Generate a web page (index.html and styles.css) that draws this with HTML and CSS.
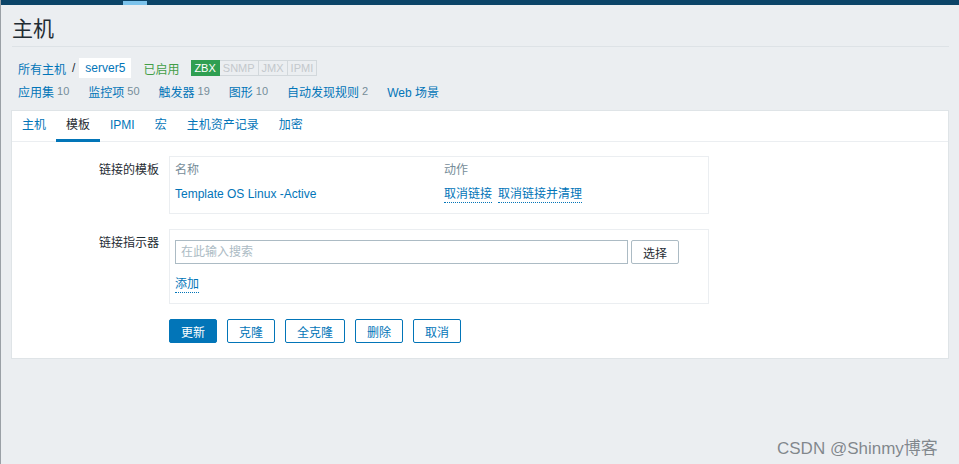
FILE: index.html
```html
<!DOCTYPE html>
<html lang="zh">
<head>
<meta charset="utf-8">
<title>主机</title>
<link rel="stylesheet" href="styles.css">
</head>
<body>
<div class="topbar"><span class="topbar-mark"></span></div>
<main class="page">
  <header class="page-header">
    <h1 class="title">主机</h1>
  </header>
  <nav class="crumbs">
    <a class="link" href="#">所有主机</a>
    <span class="sep">/</span>
    <span class="current">server5</span>
    <span class="status">已启用</span>
    <span class="avail">
      <span class="tag tag-on">ZBX</span><span class="tag">SNMP</span><span class="tag">JMX</span><span class="tag">IPMI</span>
    </span>
  </nav>
  <nav class="subnav">
    <a class="link" href="#">应用集</a><span class="count">10</span>
    <a class="link" href="#">监控项</a><span class="count">50</span>
    <a class="link" href="#">触发器</a><span class="count">19</span>
    <a class="link" href="#">图形</a><span class="count">10</span>
    <a class="link" href="#">自动发现规则</a><span class="count">2</span>
    <a class="link" href="#">Web 场景</a>
  </nav>
  <section class="card">
    <ul class="tabs">
      <li class="tab">主机</li>
      <li class="tab active">模板</li>
      <li class="tab">IPMI</li>
      <li class="tab">宏</li>
      <li class="tab">主机资产记录</li>
      <li class="tab">加密</li>
    </ul>
    <div class="form">
      <div class="label">链接的模板</div>
      <div class="box box-table">
        <div class="col1 head">名称</div>
        <div class="col2 head">动作</div>
        <div class="col1"><a class="link" href="#">Template OS Linux -Active</a></div>
        <div class="col2 actions"><a class="link dotted" href="#">取消链接</a><a class="link dotted" href="#">取消链接并清理</a></div>
      </div>
      <div class="label">链接指示器</div>
      <div class="box box-link">
        <div class="search-row">
          <input class="search" type="text" placeholder="在此输入搜索">
          <button class="btn-select" type="button">选择</button>
        </div>
        <a class="link dotted add" href="#">添加</a>
      </div>
      <div class="label"></div>
      <div class="buttons">
        <button class="btn btn-primary" type="button">更新</button>
        <button class="btn" type="button">克隆</button>
        <button class="btn" type="button">全克隆</button>
        <button class="btn" type="button">删除</button>
        <button class="btn" type="button">取消</button>
      </div>
    </div>
  </section>
</main>
<div class="watermark">CSDN @Shinmy博客</div>
</body>
</html>
```
FILE: styles.css
```css
* { box-sizing: border-box; }
html, body { margin: 0; padding: 0; }
body {
  width: 959px;
  height: 464px;
  overflow: hidden;
  background: #ebeef1;
  font-family: "Liberation Sans", Arial, "Noto Sans CJK SC", sans-serif;
  font-size: 12px;
  color: #1f2c33;
  border-left: 1px solid #9aa0a6;
  position: relative;
}
.topbar {
  height: 5px;
  background: #0b4468;
  position: relative;
}
.topbar-mark {
  position: absolute;
  left: 122px;
  top: 1px;
  width: 24px;
  height: 4px;
  background: #7cc3ec;
}
.page { padding: 0 10px 0 10px; }
.page-header {
  margin: 0 0 0 1px;
  border-bottom: 1px solid #dde2e6;
  height: 42px;
  display: flex;
  align-items: center;
}
.title {
  margin: 0;
  font-weight: normal;
  font-size: 21px;
  color: #1f2c33;
  line-height: 24px;
  padding-top: 6px;
}
.link { color: #0275b8; text-decoration: none; }
.crumbs {
  display: flex;
  align-items: center;
  margin-top: 11px;
  padding-left: 7px;
  height: 20px;
}
.sep { margin: 0 4px 0 6px; }
.current {
  background: #fff;
  color: #0275b8;
  height: 20px;
  line-height: 20px;
  padding: 0 6px;
}
.status { color: #429e47; margin-left: 12px; }
.avail { display: flex; margin-left: 12px; }
.tag {
  height: 16px;
  line-height: 14px;
  font-size: 11px;
  padding: 0 3px;
  color: #c3c8cc;
  border: 1px solid #d2d8dc;
  border-left: none;
}
.tag-on {
  background: #2f9f52;
  border-color: #2f9f52;
  color: #fff;
}
.subnav {
  display: flex;
  align-items: center;
  padding-left: 7px;
  margin-top: 5px;
  height: 16px;
}
.count {
  color: #768d99;
  font-size: 11px;
  margin-left: 3px;
  margin-right: 19px;
}
.card {
  margin-top: 11px;
  background: #fff;
  border: 1px solid #dfe4e7;
  height: 249px;
}
.tabs {
  list-style: none;
  margin: 0;
  padding: 0;
  display: flex;
  border-bottom: 1px solid #ebeef1;
  height: 31px;
}
.tab {
  padding: 0 10px;
  line-height: 28px;
  color: #0275b8;
  border-bottom: 3px solid transparent;
  height: 31px;
}
.tab.active { color: #1f2c33; border-bottom-color: #0275b8; }
.form {
  display: grid;
  grid-template-columns: 147px 540px;
  column-gap: 10px;
  row-gap: 15px;
  padding-top: 14px;
}
.label {
  text-align: right;
  padding-top: 4px;
  color: #1f2c33;
}
.box { border: 1px solid #ebeef1; }
.box-table {
  display: grid;
  grid-template-columns: 269px 1fr;
  padding: 2px 5px 9px 5px;
  height: 58px;
  row-gap: 0;
}
.head { color: #768d99; line-height: 22px; }
.col1, .col2 { line-height: 22px; }
.col1 .link { position: relative; top: 1px; }
.actions { display: flex; gap: 6px; }
.dotted { border-bottom: 1px dotted #0275b8; line-height: 16px; align-self: flex-start; }
.actions .dotted { margin-top: 4px; }
.box-link { padding: 10px 5px 9px 5px; height: 75px; }
.search-row { display: flex; gap: 3px; }
.search {
  width: 453px;
  height: 24px;
  border: 1px solid #acbbc4;
  font: inherit;
  padding: 0 5px;
  margin: 0;
}
.search::placeholder { color: #acbbc4; }
.btn-select {
  width: 48px;
  height: 24px;
  background: #fff;
  border: 1px solid #acbbc4;
  border-radius: 2px;
  font: inherit;
  color: #1f2c33;
  padding: 0;
}
.add { display: inline-block; margin-top: 12px; }
.buttons { display: flex; gap: 10px; padding-top: 0; }
.btn {
  height: 24px;
  padding: 0 11px;
  background: #fff;
  border: 1px solid #0275b8;
  border-radius: 2px;
  color: #0275b8;
  font: inherit;
}
.btn-primary { background: #0275b8; color: #fff; }
.watermark {
  position: absolute;
  left: 776px;
  top: 434px;
  font-size: 17px;
  color: rgba(110, 116, 122, 0.85);
  white-space: nowrap;
}
```
